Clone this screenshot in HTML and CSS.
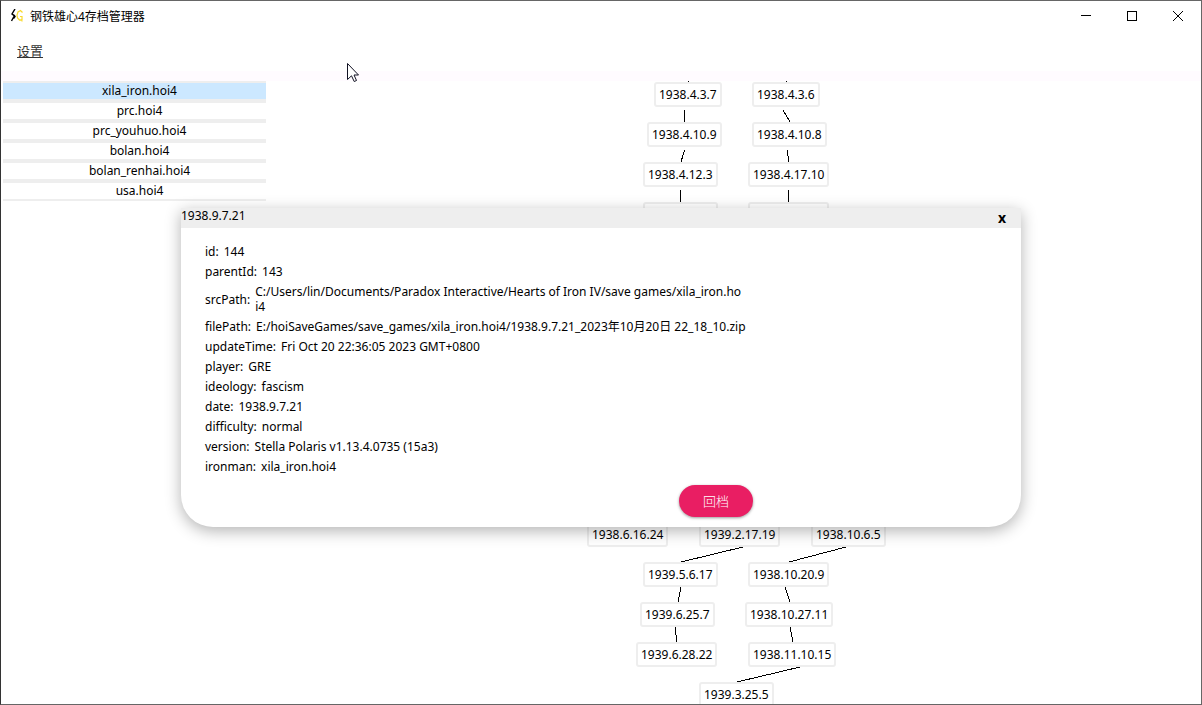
FILE: index.html
```html
<!DOCTYPE html>
<html lang="zh-CN">
<head>
<meta charset="utf-8">
<title>钢铁雄心4存档管理器</title>
<link rel="stylesheet" href="styles.css">
</head>
<body>
<div class="window">
  <header class="titlebar">
    <svg class="logo" width="13" height="14" viewBox="0 0 13 14" aria-hidden="true">
      <path d="M4 0L1 5L3.500 6.500L.5 12M1 5L4 7.500L2.500 9.500" fill="none" stroke="#000" stroke-width="1.400"/>
      <path d="M11.500 3.500L9.500 1.500L7 3L6 6L6.500 9L8.500 11L11 10.500V7.500H9M11 10V12.500" fill="none" stroke="#f8d92c" stroke-width="1.200"/>
    </svg>
    <h1 class="title">钢铁雄心4存档管理器</h1>
    <div class="controls">
      <button class="control" aria-label="最小化"><svg width="10" height="10" viewBox="0 0 10 10"><path d="M0 4.500H10"/></svg></button>
      <button class="control" aria-label="最大化"><svg width="10" height="10" viewBox="0 0 10 10"><path d="M.5 .5H9.500V9.500H.5Z"/></svg></button>
      <button class="control close" aria-label="关闭"><svg width="10" height="10" viewBox="0 0 10 10"><path d="M0 0L10 10M10 0L0 10"/></svg></button>
    </div>
  </header>
  <nav class="menubar"><button class="menu-item">设置</button></nav>
  <div class="divider"></div>
  <main class="main">
    <ul class="saves">
      <li><button class="save selected">xila_iron.hoi4</button></li>
      <li><button class="save">prc.hoi4</button></li>
      <li><button class="save">prc_youhuo.hoi4</button></li>
      <li><button class="save">bolan.hoi4</button></li>
      <li><button class="save">bolan_renhai.hoi4</button></li>
      <li><button class="save">usa.hoi4</button></li>
    </ul>
    <section class="tree">
      <svg class="edges" width="900" height="624" viewBox="0 0 900 624" aria-hidden="true">
        <path d="M422.500 0V2M520.500 0V2M418.500 29V41M517 29L524 41M418.500 69L415 81M521.500 69L522.500 81M414.500 109V121M522.500 109V121M477 466L415 481M580 466L523 481M415 506L412 521M519 506L524 521M409 546L411 561M524 546L527 561M534 586L471 601"/>
      </svg>
      <button class="node" style="left:388px;top:1px">1938.4.3.7</button>
      <button class="node" style="left:486px;top:1px">1938.4.3.6</button>
      <button class="node" style="left:381px;top:41px">1938.4.10.9</button>
      <button class="node" style="left:486px;top:41px">1938.4.10.8</button>
      <button class="node" style="left:377px;top:81px">1938.4.12.3</button>
      <button class="node" style="left:482px;top:81px">1938.4.17.10</button>
      <button class="node" style="left:377px;top:121px">1938.5.15.3</button>
      <button class="node" style="left:482px;top:121px">1938.4.30.12</button>
      <button class="node" style="left:321px;top:441px">1938.6.16.24</button>
      <button class="node" style="left:433px;top:441px">1939.2.17.19</button>
      <button class="node" style="left:545px;top:441px">1938.10.6.5</button>
      <button class="node" style="left:377px;top:481px">1939.5.6.17</button>
      <button class="node" style="left:482px;top:481px">1938.10.20.9</button>
      <button class="node" style="left:374px;top:521px">1939.6.25.7</button>
      <button class="node" style="left:479px;top:521px">1938.10.27.11</button>
      <button class="node" style="left:370px;top:561px">1939.6.28.22</button>
      <button class="node" style="left:482px;top:561px">1938.11.10.15</button>
      <button class="node" style="left:433px;top:601px">1939.3.25.5</button>
    </section>
  </main>
  <section class="dialog" role="dialog" aria-labelledby="dialog-title">
    <header class="dialog-head">
      <h2 class="dialog-title" id="dialog-title">1938.9.7.21</h2>
      <button class="dialog-close" aria-label="关闭">x</button>
    </header>
    <div class="dialog-body">
      <dl class="details">
        <div class="row"><dt>id:</dt><dd>144</dd></div>
        <div class="row"><dt>parentId:</dt><dd>143</dd></div>
        <div class="row"><dt>srcPath:</dt><dd>C:/Users/lin/Documents/Paradox Interactive/Hearts of Iron IV/save games/xila_iron.ho<br>i4</dd></div>
        <div class="row"><dt>filePath:</dt><dd>E:/hoiSaveGames/save_games/xila_iron.hoi4/1938.9.7.21_2023年10月20日 22_18_10.zip</dd></div>
        <div class="row"><dt>updateTime:</dt><dd>Fri Oct 20 22:36:05 2023 GMT+0800</dd></div>
        <div class="row"><dt>player:</dt><dd>GRE</dd></div>
        <div class="row"><dt>ideology:</dt><dd>fascism</dd></div>
        <div class="row"><dt>date:</dt><dd>1938.9.7.21</dd></div>
        <div class="row"><dt>difficulty:</dt><dd>normal</dd></div>
        <div class="row"><dt>version:</dt><dd>Stella Polaris v1.13.4.0735 (15a3)</dd></div>
        <div class="row"><dt>ironman:</dt><dd>xila_iron.hoi4</dd></div>
      </dl>
      <button class="restore">回档</button>
    </div>
  </section>
  <svg class="cursor" width="12" height="20" viewBox="0 0 12 20" aria-hidden="true">
    <path d="M.5 .5V16.500L4.500 12.800L7.200 18.500L9.500 17.500L7 12H11.500Z" fill="#fff" stroke="#112"/>
  </svg>
</div>
</body>
</html>
```
FILE: styles.css
```css
* { box-sizing: border-box; }

body {
  margin: 0;
  font: 12px/15px "Noto Sans", "Noto Sans CJK SC", sans-serif;
  color: #000;
}

button {
  margin: 0;
  padding: 0;
  border: 0;
  background: none;
  color: inherit;
  font: inherit;
}

.window {
  position: relative;
  display: flex;
  flex-direction: column;
  height: 100vh;
  overflow: hidden;
  border: 1px solid #666;
  border-left-color: #333;
  background: #fff;
}

.titlebar {
  display: flex;
  align-items: center;
  flex: none;
  height: 30px;
  padding-left: 10px;
}

.logo { margin-right: 6px; }

.title {
  flex: 1;
  margin: 0;
  font-size: 12px;
  font-weight: 400;
}

.controls { display: flex; }

.control {
  display: grid;
  place-items: center;
  width: 46px;
  height: 30px;
}

.control path {
  fill: none;
  stroke: #000;
  shape-rendering: crispEdges;
}

.close path { shape-rendering: auto; }

.menubar {
  display: flex;
  align-items: center;
  flex: none;
  height: 40px;
  padding-left: 16px;
}

.menu-item {
  color: #333;
  font-size: 13px;
  text-decoration: underline;
}

.divider {
  flex: none;
  height: 10px;
  background: #fffbff;
}

.main {
  display: flex;
  flex: 1;
  min-height: 0;
}

.saves {
  width: 265px;
  margin: 0;
  padding: 0 0 0 2px;
  list-style: none;
}

.save {
  display: block;
  width: 100%;
  height: 20px;
  padding: 0 0 2px 10px;
  border: solid #eee;
  border-width: 2px 0;
}

.selected { background: #cce8ff; }

.tree {
  position: relative;
  flex: 1;
  overflow: hidden;
}

.edges {
  display: block;
  fill: none;
  stroke: #000;
  shape-rendering: crispEdges;
}

.node {
  position: absolute;
  height: 25px;
  padding: 0 3px;
  border: 2px solid #eee;
  border-radius: 3px;
  background: #fff;
  white-space: nowrap;
}

.dialog {
  position: absolute;
  top: 207px;
  left: 15%;
  width: 70%;
  border-radius: 0 0 32px 32px;
  background: #fff;
  box-shadow: 0 4px 16px rgba(0, 0, 0, .3);
}

.dialog-head {
  display: flex;
  justify-content: space-between;
  height: 20px;
  padding-right: 14px;
  background: #eee;
}

.dialog-title {
  margin: 0;
  font-size: 12px;
  font-weight: 400;
}

.dialog-close {
  width: 10px;
  padding-bottom: 2px;
  font-size: 14px;
  font-weight: 700;
}

.dialog-body { padding: 16px 24px 10px; }

.details {
  display: flex;
  flex-direction: column;
  gap: 5px;
  margin: 0 0 11px;
}

.row {
  display: flex;
  align-items: center;
  gap: 5px;
}

.row dd { margin: 0; }

.restore {
  display: block;
  width: 74px;
  height: 32px;
  margin-left: 474px;
  border-radius: 16px;
  background: #e91e63;
  color: #fff;
  font-size: 13px;
  font-weight: 300;
  box-shadow: 0 1px 3px rgba(0, 0, 0, .4);
}

.cursor {
  position: absolute;
  top: 62px;
  left: 346px;
}
```
